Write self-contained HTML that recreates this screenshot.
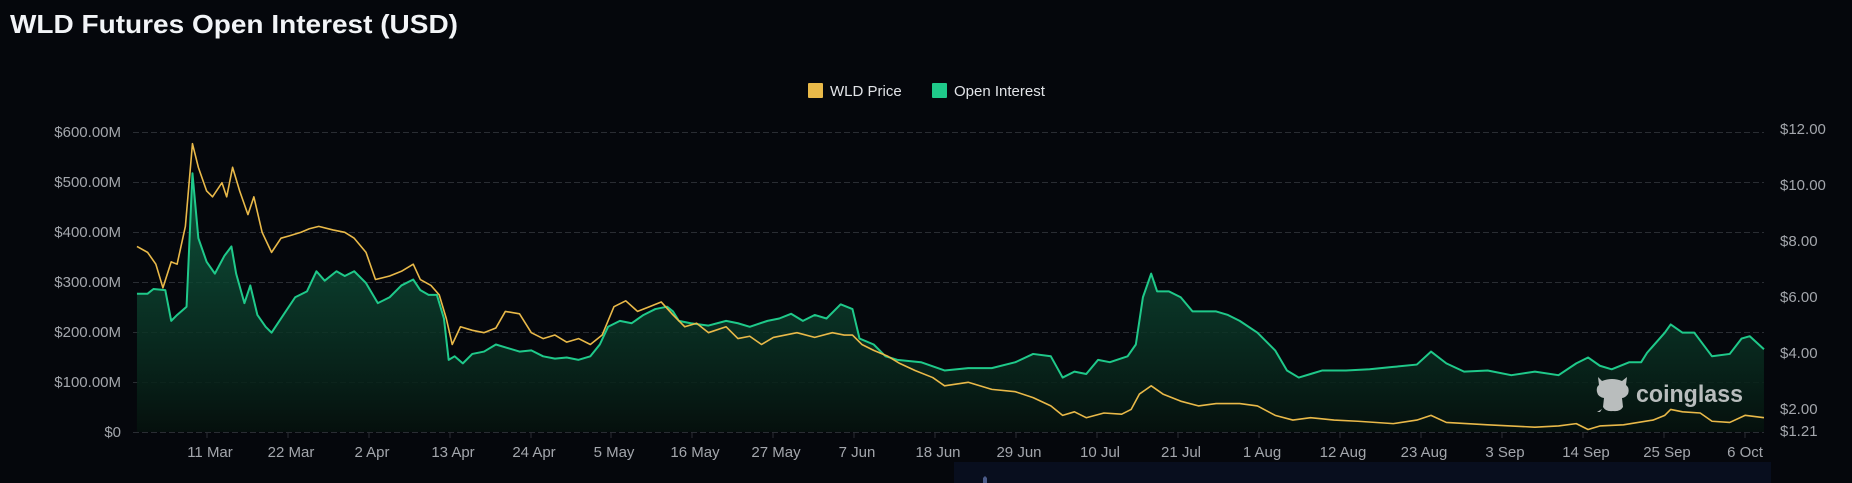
<!DOCTYPE html>
<html><head><meta charset="utf-8"><style>
html,body{margin:0;padding:0;background:#05070c;width:1852px;height:483px;overflow:hidden}
svg{display:block}
</style></head><body>
<svg width="1852" height="483" viewBox="0 0 1852 483" xmlns="http://www.w3.org/2000/svg">
<rect width="1852" height="483" fill="#05070c"/>
<text x="10" y="33" font-family="Liberation Sans, sans-serif" font-weight="bold" font-size="26" fill="#f2f4f7" textLength="448" lengthAdjust="spacingAndGlyphs">WLD Futures Open Interest (USD)</text>
<rect x="808" y="83" width="15" height="15" fill="#e9b949" rx="1"/>
<text x="830" y="96" font-family="Liberation Sans, sans-serif" font-size="15" fill="#e2e4e8">WLD Price</text>
<rect x="932" y="83" width="15" height="15" fill="#1fc98a" rx="1"/>
<text x="954" y="96" font-family="Liberation Sans, sans-serif" font-size="15" fill="#e2e4e8">Open Interest</text>
<g stroke="#2a2d33" stroke-width="1" stroke-dasharray="6 3">
<line x1="133" y1="132.5" x2="1764" y2="132.5"/><line x1="133" y1="182.5" x2="1764" y2="182.5"/>
<line x1="133" y1="232.5" x2="1764" y2="232.5"/><line x1="133" y1="282.5" x2="1764" y2="282.5"/>
<line x1="133" y1="332.5" x2="1764" y2="332.5"/><line x1="133" y1="382.5" x2="1764" y2="382.5"/>
<line x1="133" y1="432.5" x2="1764" y2="432.5"/>
</g>
<g font-family="Liberation Sans, sans-serif" font-size="15" fill="#a3a6ac" text-anchor="end">
<text x="121" y="137">$600.00M</text><text x="121" y="187">$500.00M</text><text x="121" y="237">$400.00M</text>
<text x="121" y="287">$300.00M</text><text x="121" y="337">$200.00M</text><text x="121" y="387">$100.00M</text><text x="121" y="437">$0</text>
</g>
<g font-family="Liberation Sans, sans-serif" font-size="15" fill="#a3a6ac">
<text x="1780" y="134">$12.00</text><text x="1780" y="190">$10.00</text><text x="1780" y="246">$8.00</text>
<text x="1780" y="302">$6.00</text><text x="1780" y="358">$4.00</text><text x="1780" y="414">$2.00</text><text x="1780" y="436">$1.21</text>
</g>
<defs>
<linearGradient id="gf" x1="0" y1="120" x2="0" y2="364" gradientUnits="userSpaceOnUse">
<stop offset="0" stop-color="#127550" stop-opacity="0.75"/>
<stop offset="0.55" stop-color="#0b3e2c" stop-opacity="0.8"/>
<stop offset="1" stop-color="#05110d" stop-opacity="0.9"/>
</linearGradient>
</defs>
<g transform="matrix(1.1807 0 0 1.181 0 2)">
<polygon fill="url(#gf)" points="116,364 116,247 125,247 130,243 140,244 145,270 150,265 158,258 163,145 168,200 175,220 182,230 190,215 196,207 200,230 207,255 212,240 218,265 225,275 230,280 240,265 250,250 260,245 268,228 275,236 285,228 292,232 300,228 310,238 320,255 330,250 340,240 350,235 356,244 363,248 370,248 376,268 380,303 385,300 392,306 400,298 410,296 420,290 430,293 440,296 450,295 460,300 470,302 480,301 490,303 500,300 508,290 515,275 525,270 535,272 545,265 555,260 565,258 570,262 575,270 585,272 600,274 615,270 625,272 635,275 650,270 660,268 670,264 680,270 690,265 700,268 712,256 722,260 728,285 740,290 750,300 760,303 780,305 800,312 820,310 840,310 860,305 875,298 890,300 900,318 910,313 920,315 930,303 940,305 955,300 962,290 968,250 975,230 980,245 990,245 1000,250 1010,262 1020,262 1030,262 1040,265 1050,270 1065,280 1080,295 1090,312 1100,318 1110,315 1120,312 1140,312 1160,311 1180,309 1200,307 1212,296 1225,306 1240,313 1260,312 1280,316 1300,313 1320,316 1335,306 1345,301 1355,308 1365,311 1380,305 1390,305 1395,297 1410,280 1415,273 1425,280 1435,280 1450,300 1465,298 1475,285 1482,283 1494,294 1494,364"/>
<polyline fill="none" stroke="#1fc98a" stroke-width="2" vector-effect="non-scaling-stroke" stroke-linejoin="round" points="116,247 125,247 130,243 140,244 145,270 150,265 158,258 163,145 168,200 175,220 182,230 190,215 196,207 200,230 207,255 212,240 218,265 225,275 230,280 240,265 250,250 260,245 268,228 275,236 285,228 292,232 300,228 310,238 320,255 330,250 340,240 350,235 356,244 363,248 370,248 376,268 380,303 385,300 392,306 400,298 410,296 420,290 430,293 440,296 450,295 460,300 470,302 480,301 490,303 500,300 508,290 515,275 525,270 535,272 545,265 555,260 565,258 570,262 575,270 585,272 600,274 615,270 625,272 635,275 650,270 660,268 670,264 680,270 690,265 700,268 712,256 722,260 728,285 740,290 750,300 760,303 780,305 800,312 820,310 840,310 860,305 875,298 890,300 900,318 910,313 920,315 930,303 940,305 955,300 962,290 968,250 975,230 980,245 990,245 1000,250 1010,262 1020,262 1030,262 1040,265 1050,270 1065,280 1080,295 1090,312 1100,318 1110,315 1120,312 1140,312 1160,311 1180,309 1200,307 1212,296 1225,306 1240,313 1260,312 1280,316 1300,313 1320,316 1335,306 1345,301 1355,308 1365,311 1380,305 1390,305 1395,297 1410,280 1415,273 1425,280 1435,280 1450,300 1465,298 1475,285 1482,283 1494,294"/>
<polyline fill="none" stroke="#e9b949" stroke-width="1.6" vector-effect="non-scaling-stroke" stroke-linejoin="round" points="116,207 125,212 132,222 138,242 145,220 150,222 157,190 163,120 168,140 175,160 180,165 188,153 192,165 197,140 203,160 210,180 215,165 222,195 230,212 238,200 245,198 255,195 262,192 270,190 282,193 292,195 300,200 310,212 318,235 330,232 340,228 350,222 356,235 365,240 372,248 378,268 383,290 390,275 400,278 410,280 420,276 428,262 440,264 450,280 460,285 470,282 480,288 490,285 500,290 510,282 520,258 530,253 540,262 550,258 560,254 570,265 580,275 590,272 600,280 615,275 625,285 635,283 645,290 655,284 665,282 675,280 690,284 705,280 715,282 722,282 730,290 740,295 752,300 762,306 775,312 790,318 800,325 820,322 840,328 860,330 875,335 890,342 900,350 910,347 920,352 935,348 950,349 958,345 965,332 975,325 985,332 1000,338 1015,342 1030,340 1050,340 1065,342 1080,350 1095,354 1110,352 1130,354 1150,355 1180,357 1200,354 1212,350 1225,356 1260,358 1300,360 1320,359 1335,357 1345,362 1355,359 1375,358 1400,354 1410,350 1415,345 1425,347 1440,348 1450,355 1465,356 1478,350 1494,352"/>
</g>
<g stroke="#2a2d33" stroke-width="1">
<line x1="207" y1="433" x2="207" y2="438"/><line x1="288" y1="433" x2="288" y2="438"/><line x1="369" y1="433" x2="369" y2="438"/><line x1="450" y1="433" x2="450" y2="438"/><line x1="531" y1="433" x2="531" y2="438"/><line x1="611" y1="433" x2="611" y2="438"/><line x1="692" y1="433" x2="692" y2="438"/><line x1="773" y1="433" x2="773" y2="438"/><line x1="854" y1="433" x2="854" y2="438"/><line x1="935" y1="433" x2="935" y2="438"/><line x1="1016" y1="433" x2="1016" y2="438"/><line x1="1097" y1="433" x2="1097" y2="438"/><line x1="1178" y1="433" x2="1178" y2="438"/><line x1="1259" y1="433" x2="1259" y2="438"/><line x1="1340" y1="433" x2="1340" y2="438"/><line x1="1421" y1="433" x2="1421" y2="438"/><line x1="1502" y1="433" x2="1502" y2="438"/><line x1="1583" y1="433" x2="1583" y2="438"/><line x1="1664" y1="433" x2="1664" y2="438"/><line x1="1745" y1="433" x2="1745" y2="438"/>
</g>
<g font-family="Liberation Sans, sans-serif" font-size="15" fill="#a3a6ac" text-anchor="middle">
<text x="210" y="457">11 Mar</text><text x="291" y="457">22 Mar</text><text x="372" y="457">2 Apr</text><text x="453" y="457">13 Apr</text><text x="534" y="457">24 Apr</text><text x="614" y="457">5 May</text><text x="695" y="457">16 May</text><text x="776" y="457">27 May</text><text x="857" y="457">7 Jun</text><text x="938" y="457">18 Jun</text><text x="1019" y="457">29 Jun</text><text x="1100" y="457">10 Jul</text><text x="1181" y="457">21 Jul</text><text x="1262" y="457">1 Aug</text><text x="1343" y="457">12 Aug</text><text x="1424" y="457">23 Aug</text><text x="1505" y="457">3 Sep</text><text x="1586" y="457">14 Sep</text><text x="1667" y="457">25 Sep</text><text x="1745" y="457">6 Oct</text>
</g>
<rect x="954" y="462" width="817" height="21" fill="#080e1e"/>
<path d="M983 483 L983 478 L985 476 L987 478 L987 483" fill="#4a5a88"/>
<g fill="#b9bdbd">
<path d="M1598 377 L1602 381 Q1612 377 1622 381 L1627 377 L1626 385 Q1630 388 1628 394 Q1625 398 1622 398 L1623 407 Q1620 412 1613 411 Q1606 412 1603 407 L1604 398 Q1598 397 1597 392 Q1596 387 1599 385 Z"/>
<path d="M1602 409 L1597 412 L1600 412 Z"/>
</g>
<text x="1636" y="402" font-family="Liberation Sans, sans-serif" font-weight="bold" font-size="24" fill="#b9bdbd" textLength="107" lengthAdjust="spacingAndGlyphs">coinglass</text>
</svg>
</body></html>
